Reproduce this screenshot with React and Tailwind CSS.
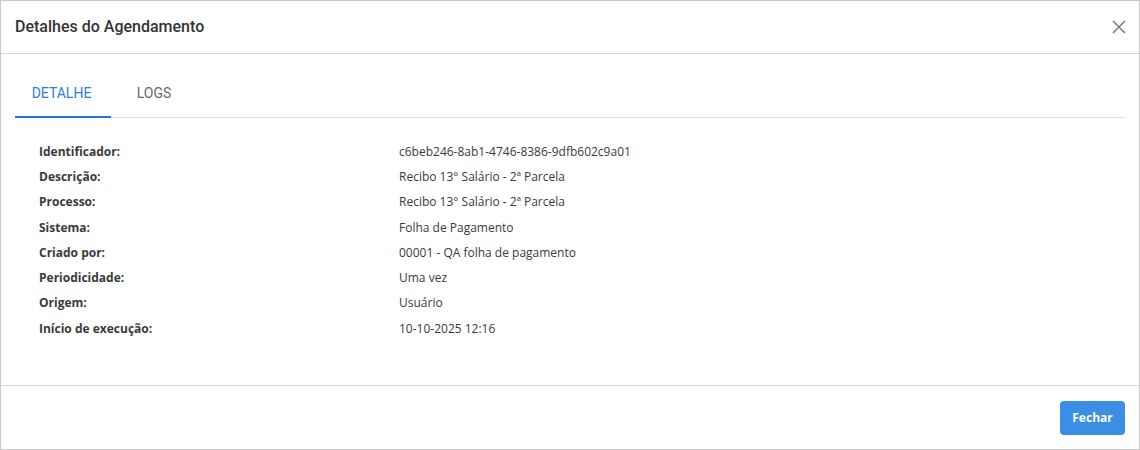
import React from "react";

const rows = [
  ["Identificador:", "c6beb246-8ab1-4746-8386-9dfb602c9a01"],
  ["Descrição:", "Recibo 13° Salário - 2ª Parcela"],
  ["Processo:", "Recibo 13° Salário - 2ª Parcela"],
  ["Sistema:", "Folha de Pagamento"],
  ["Criado por:", "00001 - QA folha de pagamento"],
  ["Periodicidade:", "Uma vez"],
  ["Origem:", "Usuário"],
  ["Início de execução:", "10-10-2025 12:16"],
];

export default function App() {
  return (
    <div className="w-[1140px] h-[450px] bg-white border border-[#c8c8c8] flex flex-col" style={{ fontFamily: "'Open Sans', sans-serif" }}>
      <div className="h-[53px] flex items-center justify-between pl-[14px] pr-[14px] border-b border-[#d4d4d4] shrink-0">
        <div className="text-[16px] font-medium text-[#333333]" style={{ fontFamily: "Roboto, sans-serif" }}>Detalhes do Agendamento</div>
        <svg width="14" height="14" viewBox="0 0 14 14" className="mr-[-1px]">
          <path d="M1 1 L13 13 M13 1 L1 13" stroke="#7a7a7a" strokeWidth="1.5" />
        </svg>
      </div>
      <div className="flex-1 px-[14px] pt-[16px]">
        <div className="flex border-b border-[#dcdcdc] h-[48px]" style={{ fontFamily: "Roboto, sans-serif" }}>
          <div className="w-[96px] flex items-center justify-center text-[14px] text-[#2d7ed6] border-b-2 border-[#1f78d6] mb-[-1px] pt-[1px] pr-[3px]">DETALHE</div>
          <div className="w-[90px] flex items-center justify-center text-[14px] text-[#6b6b6b] pr-[4px]">LOGS</div>
        </div>
        <div className="pt-[21px] pl-[24px]">
          {rows.map(([l, v]) => (
            <div key={l} className="flex items-center h-[25.3px] text-[12px]">
              <div className="w-[360px] font-bold text-[#3a3a3a]">{l}</div>
              <div className="text-[#3a3a3a]">{v}</div>
            </div>
          ))}
        </div>
      </div>
      <div className="h-[64px] border-t border-[#d4d4d4] flex items-center justify-end pr-[14px] shrink-0">
        <button className="w-[65px] h-[34px] rounded-[4px] bg-[#3a8ee3] text-white text-[12px] font-bold">Fechar</button>
      </div>
    </div>
  );
}
